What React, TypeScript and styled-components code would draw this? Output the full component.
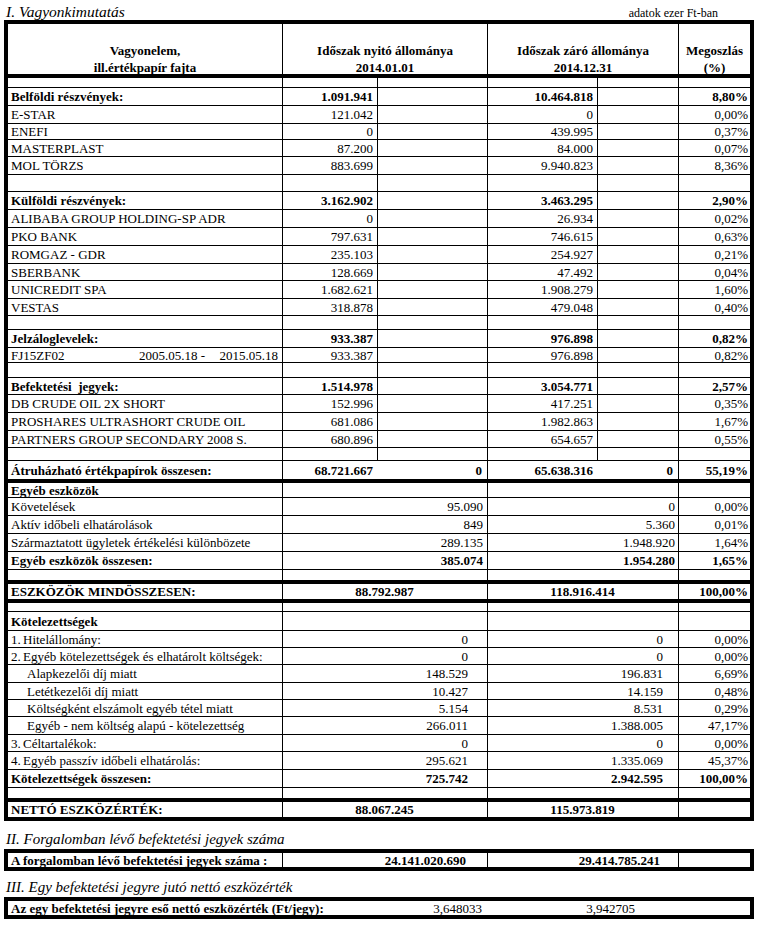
import React from "react";
import styled, { createGlobalStyle } from "styled-components";

const GlobalStyle = createGlobalStyle`
  html, body { margin: 0; padding: 0; background: #fff; }
  body {
    font-family: "Liberation Serif", "Times New Roman", serif;
    color: #000;
    font-size: 13px;
  }
  * { box-sizing: border-box; }
`;

const COLS = "274px 95px 110px 110px 81px 72px";
const STRIP_COLS = "274px 205px 191px 72px";

const Page = styled.div`
  width: 765px;
  padding: 0 11px 0 4px;
`;

const TitleBar = styled.div`
  height: 20px;
  display: flex;
  align-items: baseline;
  justify-content: space-between;
  padding: 4px 36px 0 2px;
`;

const Title = styled.h1`
  margin: 0;
  font-size: 15.5px;
  font-style: italic;
  font-weight: normal;
  line-height: 1;
`;

const Unit = styled.span`
  font-size: 12px;
  line-height: 1;
`;

const SectionTitle = styled.h2<{ $h: number }>`
  margin: 0;
  height: ${(p) => p.$h}px;
  display: flex;
  align-items: flex-end;
  padding: 0 0 2px 2px;
  font-size: 15px;
  font-style: italic;
  font-weight: normal;
  line-height: 1;
`;

const Sheet = styled.div`
  border: 4px solid #000;
`;

const Row = styled.div<{ $h: number; $thick?: boolean; $last?: boolean }>`
  display: grid;
  grid-template-columns: ${COLS};
  height: ${(p) => p.$h}px;
  border-bottom: ${(p) =>
    p.$last ? "none" : p.$thick ? "4px solid #000" : "1px solid #000"};
`;

const Strip = styled.div`
  display: grid;
  grid-template-columns: ${STRIP_COLS};
  height: 22px;
  border: 4px solid #000;
`;

type Align = "left" | "right" | "center";

const Cell = styled.div<{
  $span?: number;
  $align?: Align;
  $bold?: boolean;
  $line?: boolean;
  $pr?: number;
  $pl?: number;
}>`
  grid-column: span ${(p) => p.$span ?? 1};
  display: flex;
  align-items: center;
  justify-content: ${(p) =>
    p.$align === "right" ? "flex-end" : p.$align === "center" ? "center" : "flex-start"};
  border-left: ${(p) => (p.$line ? "1px solid #000" : "none")};
  padding: 0 ${(p) => p.$pr ?? 4}px 0 ${(p) => p.$pl ?? 3}px;
  font-weight: ${(p) => (p.$bold ? 700 : 400)};
  white-space: pre;
  line-height: 1;
  min-width: 0;
`;

const HeadCell = styled.div<{ $span?: number; $line?: boolean }>`
  grid-column: span ${(p) => p.$span ?? 1};
  display: flex;
  flex-direction: column;
  justify-content: flex-end;
  align-items: center;
  border-left: ${(p) => (p.$line ? "1px solid #000" : "none")};
  font-weight: 700;
  line-height: 17px;
  text-align: center;
`;

const HeadText = styled.div`
  display: flex;
  flex-direction: column;
  align-items: center;
  margin-bottom: -2px;
`;

const Num = styled.span`
  display: inline-block;
  width: 12px;
`;

const Indent = styled.span<{ $w: number }>`
  display: inline-block;
  width: ${(p) => p.$w}px;
`;

const Push = styled.span`
  margin-left: auto;
`;

type TopRow = {
  label?: string;
  a?: string;
  b?: string;
  c?: string;
  d?: string;
  pct?: string;
  bold?: boolean;
  h: number;
  split?: boolean;
  thick?: boolean;
  dates?: [string, string];
};

const topRows: TopRow[] = [
  { h: 10 },
  { label: "Belföldi részvények:", a: "1.091.941", c: "10.464.818", pct: "8,80%", bold: true, h: 18 },
  { label: "E-STAR", a: "121.042", c: "0", pct: "0,00%", h: 18 },
  { label: "ENEFI", a: "0", c: "439.995", pct: "0,37%", h: 16 },
  { label: "MASTERPLAST", a: "87.200", c: "84.000", pct: "0,07%", h: 17 },
  { label: "MOL TÖRZS", a: "883.699", c: "9.940.823", pct: "8,36%", h: 18 },
  { h: 17 },
  { label: "Külföldi részvények:", a: "3.162.902", c: "3.463.295", pct: "2,90%", bold: true, h: 18 },
  { label: "ALIBABA GROUP HOLDING-SP ADR", a: "0", c: "26.934", pct: "0,02%", h: 18 },
  { label: "PKO BANK", a: "797.631", c: "746.615", pct: "0,63%", h: 18 },
  { label: "ROMGAZ - GDR", a: "235.103", c: "254.927", pct: "0,21%", h: 18 },
  { label: "SBERBANK", a: "128.669", c: "47.492", pct: "0,04%", h: 17 },
  { label: "UNICREDIT SPA", a: "1.682.621", c: "1.908.279", pct: "1,60%", h: 18 },
  { label: "VESTAS", a: "318.878", c: "479.048", pct: "0,40%", h: 17 },
  { h: 14 },
  { label: "Jelzáloglevelek:", a: "933.387", c: "976.898", pct: "0,82%", bold: true, h: 18 },
  { label: "FJ15ZF02", dates: ["2005.05.18 -", "2015.05.18"], a: "933.387", c: "976.898", pct: "0,82%", h: 15 },
  { h: 15 },
  { label: "Befektetési  jegyek:", a: "1.514.978", c: "3.054.771", pct: "2,57%", bold: true, h: 17 },
  { label: "DB CRUDE OIL 2X SHORT", a: "152.996", c: "417.251", pct: "0,35%", h: 18 },
  { label: "PROSHARES ULTRASHORT CRUDE OIL", a: "681.086", c: "1.982.863", pct: "1,67%", h: 18 },
  { label: "PARTNERS GROUP SECONDARY 2008 S.", a: "680.896", c: "654.657", pct: "0,55%", h: 17 },
  { h: 13 },
  {
    label: "Átruházható értékpapírok összesen:",
    a: "68.721.667",
    b: "0",
    c: "65.638.316",
    d: "0",
    pct: "55,19%",
    bold: true,
    h: 22,
    thick: true,
    split: false,
  },
];

type MidRow = {
  label?: React.ReactNode;
  v2?: string;
  v3?: string;
  pct?: string;
  bold?: boolean;
  h: number;
  thick?: boolean;
  last?: boolean;
  center?: boolean;
};

const otherRows: MidRow[] = [
  { label: "Egyéb eszközök", bold: true, h: 15 },
  { label: "Követelések", v2: "95.090", v3: "0", pct: "0,00%", h: 18 },
  { label: "Aktív időbeli elhatárolások", v2: "849", v3: "5.360", pct: "0,01%", h: 18 },
  { label: "Származtatott ügyletek értékelési különbözete", v2: "289.135", v3: "1.948.920", pct: "1,64%", h: 18 },
  { label: "Egyéb eszközök összesen:", v2: "385.074", v3: "1.954.280", pct: "1,65%", bold: true, h: 18 },
  { h: 14, thick: true },
  {
    label: "ESZKÖZÖK MINDÖSSZESEN:",
    v2: "88.792.987",
    v3: "118.916.414",
    pct: "100,00%",
    bold: true,
    h: 19,
    thick: true,
    center: true,
  },
];

const numbered = (n: string, text: string) => (
  <>
    <Num>{n}</Num>
    {text}
  </>
);
const sub = (text: string) => (
  <>
    <Indent $w={16} />
    {text}
  </>
);

const liabRows: MidRow[] = [
  { h: 9 },
  { label: "Kötelezettségek", bold: true, h: 19 },
  { label: numbered("1.", "Hitelállomány:"), v2: "0", v3: "0", pct: "0,00%", h: 17 },
  { label: numbered("2.", "Egyéb kötelezettségek és elhatárolt költségek:"), v2: "0", v3: "0", pct: "0,00%", h: 17 },
  { label: sub("Alapkezelői díj miatt"), v2: "148.529", v3: "196.831", pct: "6,69%", h: 18 },
  { label: sub("Letétkezelői díj miatt"), v2: "10.427", v3: "14.159", pct: "0,48%", h: 17 },
  { label: sub("Költségként elszámolt egyéb tétel miatt"), v2: "5.154", v3: "8.531", pct: "0,29%", h: 17 },
  { label: sub("Egyéb - nem költség alapú - kötelezettség"), v2: "266.011", v3: "1.388.005", pct: "47,17%", h: 18 },
  { label: numbered("3.", "Céltartalékok:"), v2: "0", v3: "0", pct: "0,00%", h: 17 },
  { label: numbered("4.", "Egyéb passzív időbeli elhatárolás:"), v2: "295.621", v3: "1.335.069", pct: "45,37%", h: 18 },
  { label: "Kötelezettségek összesen:", v2: "725.742", v3: "2.942.595", pct: "100,00%", bold: true, h: 18 },
  { h: 14, thick: true },
  {
    label: "NETTÓ ESZKÖZÉRTÉK:",
    v2: "88.067.245",
    v3: "115.973.819",
    bold: true,
    h: 15,
    last: true,
    center: true,
  },
];

function TopTableRow({ r }: { r: TopRow }) {
  const split = r.split !== false;
  return (
    <Row $h={r.h} $thick={r.thick}>
      <Cell $bold={r.bold}>
        {r.dates ? (
          <>
            <Indent $w={128}>{r.label}</Indent>
            {r.dates[0]}
            <Push>{r.dates[1]}</Push>
          </>
        ) : (
          r.label
        )}
      </Cell>
      <Cell $line $align="right" $bold={r.bold}>{r.a}</Cell>
      <Cell $line={split} $align="right" $bold={r.bold} $pr={5}>{r.b}</Cell>
      <Cell $line $align="right" $bold={r.bold}>{r.c}</Cell>
      <Cell $line={split} $align="right" $bold={r.bold} $pr={5}>{r.d}</Cell>
      <Cell $line $align="right" $bold={r.bold} $pr={2}>{r.pct}</Cell>
    </Row>
  );
}

function MergedRow({ r, pr2, pr3 }: { r: MidRow; pr2: number; pr3: number }) {
  return (
    <Row $h={r.h} $thick={r.thick} $last={r.last}>
      <Cell $bold={r.bold}>{r.label}</Cell>
      <Cell
        $span={2}
        $line
        $align={r.center ? "center" : "right"}
        $pr={r.center ? 4 : pr2}
        $bold={r.bold}
      >
        {r.v2}
      </Cell>
      <Cell $span={2} $line $align={r.center ? "center" : "right"} $pr={r.center ? 4 : pr3} $bold={r.bold}>
        {r.v3}
      </Cell>
      <Cell $line $align="right" $bold={r.bold} $pr={2}>{r.pct}</Cell>
    </Row>
  );
}

export default function App() {
  return (
    <>
      <GlobalStyle />
      <Page>
        <TitleBar>
          <Title>I. Vagyonkimutatás</Title>
          <Unit>adatok ezer Ft-ban</Unit>
        </TitleBar>
        <Sheet>
          <Row $h={54} $thick>
            <HeadCell>
              <HeadText>
                <span>Vagyonelem,</span>
                <span>ill.értékpapír fajta</span>
              </HeadText>
            </HeadCell>
            <HeadCell $span={2} $line>
              <HeadText>
                <span>Időszak nyitó állománya</span>
                <span>2014.01.01</span>
              </HeadText>
            </HeadCell>
            <HeadCell $span={2} $line>
              <HeadText>
                <span>Időszak záró állománya</span>
                <span>2014.12.31</span>
              </HeadText>
            </HeadCell>
            <HeadCell $line>
              <HeadText>
                <span>Megoszlás</span>
                <span>(%)</span>
              </HeadText>
            </HeadCell>
          </Row>
          {topRows.map((r, i) => (
            <TopTableRow key={`t${i}`} r={r} />
          ))}
          {otherRows.map((r, i) => (
            <MergedRow key={`o${i}`} r={r} pr2={4} pr3={3} />
          ))}
          {liabRows.map((r, i) => (
            <MergedRow key={`l${i}`} r={r} pr2={19} pr3={15} />
          ))}
        </Sheet>

        <SectionTitle $h={28}>II. Forgalomban lévő befektetési jegyek száma</SectionTitle>
        <Strip>
          <Cell $bold>A forgalomban lévő befektetési jegyek száma :</Cell>
          <Cell $line $align="right" $bold $pr={21}>24.141.020.690</Cell>
          <Cell $line $align="right" $bold $pr={18}>29.414.785.241</Cell>
          <Cell $line />
        </Strip>

        <SectionTitle $h={26}>III. Egy befektetési jegyre jutó nettó eszközérték</SectionTitle>
        <Strip>
          <Cell $bold>Az egy befektetési jegyre eső nettó eszközérték (Ft/jegy):</Cell>
          <Cell $align="right" $pr={5}>3,648033</Cell>
          <Cell $align="right" $pr={43}>3,942705</Cell>
          <Cell />
        </Strip>
      </Page>
    </>
  );
}
